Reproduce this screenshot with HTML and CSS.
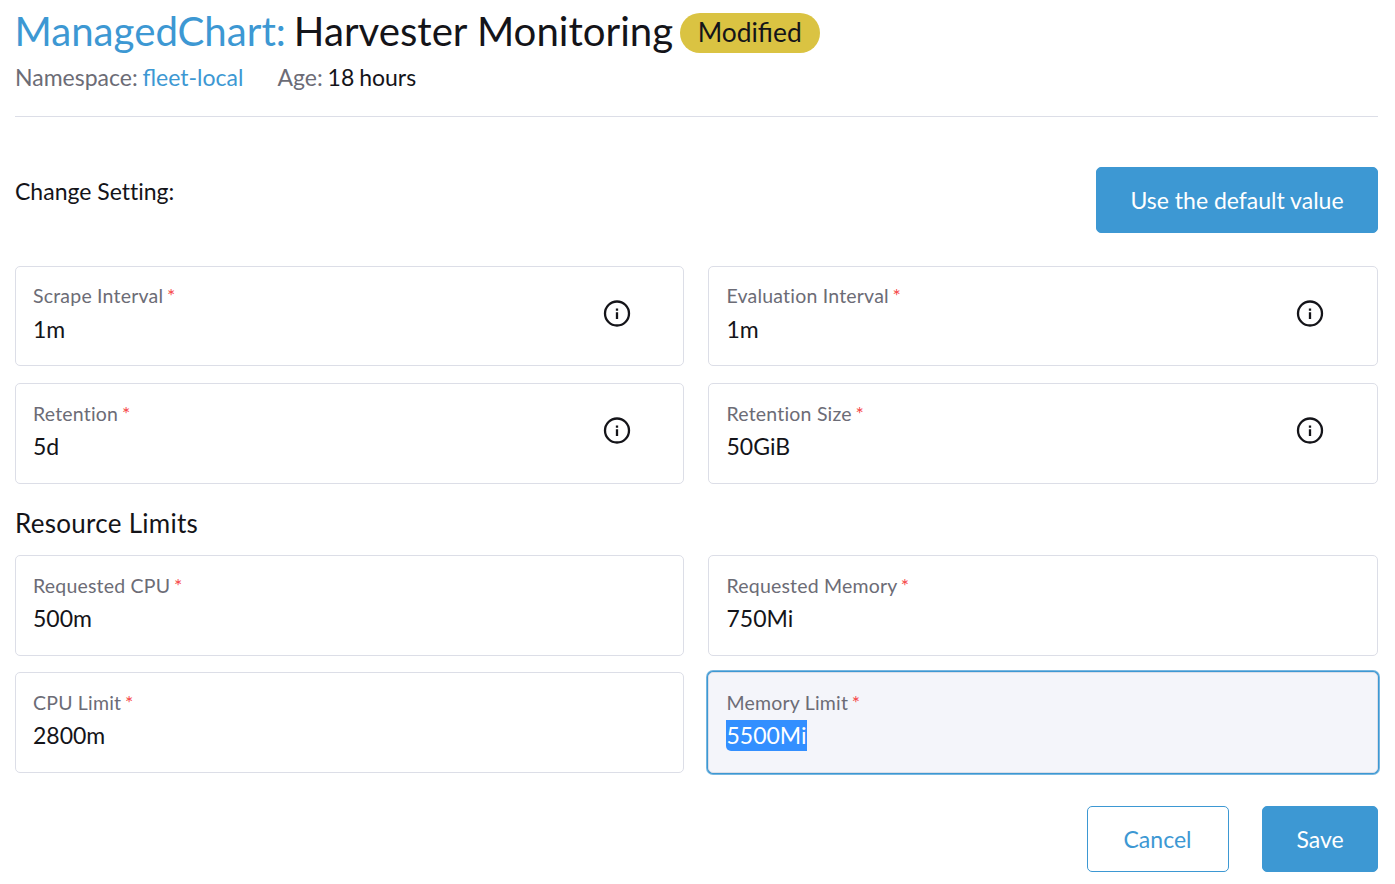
FILE: index.html
```html
<!DOCTYPE html>
<html lang="en">
<head>
<meta charset="utf-8">
<title>Harvester Monitoring</title>
<link rel="stylesheet" href="styles.css">
</head>
<body>
<main class="page">
  <header class="masthead">
    <h1 class="title"><span class="link kind">ManagedChart:</span> <span class="name">Harvester Monitoring</span><span class="badge">Modified</span></h1>
    <div class="meta"><span>Namespace: <a class="link">fleet-local</a></span><span>Age: <b class="value-text">18 hours</b></span></div>
  </header>
  <section class="setting-bar">
    <span class="setting-label">Change Setting:</span>
    <button class="btn primary default-btn">Use the default value</button>
  </section>
  <section class="fields general">
    <div class="field"><div class="label">Scrape Interval <i class="req">*</i></div><div class="input">1m</div><svg class="info" viewBox="0 0 28 28"><circle cx="14" cy="13.5" r="12"/><path d="M14 12.3v6.7M14 8.6v2.2"/></svg></div>
    <div class="field"><div class="label">Evaluation Interval <i class="req">*</i></div><div class="input">1m</div><svg class="info" viewBox="0 0 28 28"><circle cx="14" cy="13.5" r="12"/><path d="M14 12.3v6.7M14 8.6v2.2"/></svg></div>
    <div class="field"><div class="label">Retention <i class="req">*</i></div><div class="input">5d</div><svg class="info" viewBox="0 0 28 28"><circle cx="14" cy="13.5" r="12"/><path d="M14 12.3v6.7M14 8.6v2.2"/></svg></div>
    <div class="field"><div class="label">Retention Size <i class="req">*</i></div><div class="input">50GiB</div><svg class="info" viewBox="0 0 28 28"><circle cx="14" cy="13.5" r="12"/><path d="M14 12.3v6.7M14 8.6v2.2"/></svg></div>
  </section>
  <h2 class="subtitle">Resource Limits</h2>
  <section class="fields limits">
    <div class="field"><div class="label">Requested CPU <i class="req">*</i></div><div class="input">500m</div></div>
    <div class="field"><div class="label">Requested Memory <i class="req">*</i></div><div class="input">750Mi</div></div>
    <div class="field"><div class="label">CPU Limit <i class="req">*</i></div><div class="input">2800m</div></div>
    <div class="field focused"><div class="label">Memory Limit <i class="req">*</i></div><div class="input"><span class="selected">5500Mi</span></div></div>
  </section>
  <footer class="actions"><button class="btn secondary">Cancel</button><button class="btn primary save">Save</button></footer>
</main>
</body>
</html>
```
FILE: styles.css
```css
* { box-sizing: border-box; }
body { margin: 0; background: #fff; color: #141419; font-family: Lato, sans-serif; font-size: 23px; }
.page { height: 884px; padding: 0 17px 0 15px; overflow: hidden; }
.masthead { height: 117px; border-bottom: 1px solid #dcdee7; }
.title { display: flex; align-items: flex-start; height: 64px; margin: 0 0 0 -.5px; font-size: 40.2px; line-height: 62px; font-weight: 400; white-space: pre; }
.link { color: #3d98d3; }
.name { margin-left: 8px; }
.badge { height: 40px; margin: 13px 0 0 6.5px; padding: 0 18px; border-radius: 20px; background: #dac342; font-size: 26.4px; line-height: 39px; }
.meta { display: flex; gap: 34px; color: #6c6c76; line-height: 26px; word-spacing: -1px; }
.value-text { color: #141419; font-weight: 400; }
.setting-bar { display: flex; justify-content: space-between; height: 149px; padding-top: 50px; }
.setting-label { line-height: 48px; font-variant-ligatures: none; }
.btn { height: 66px; border: 1px solid #3d98d3; border-radius: 5px; font: 23px Lato, sans-serif; padding: 0; }
.primary { background: #3d98d3; color: #fff; }
.default-btn { width: 282px; }
.fields { display: grid; grid-template-columns: 669px 670px; column-gap: 24px; grid-template-rows: 100px 101px; row-gap: 17px; }
.field { position: relative; padding: 17px; border: 1px solid #dcdee7; border-radius: 5px; }
.field:nth-child(even) { padding-left: 17.5px; }
.label { color: #6c6c76; font-size: 19.5px; line-height: 26px; letter-spacing: .2px; }
.general .field:nth-child(-n+2) { padding-top: 16px; }
.general .field:nth-child(-n+2) .input { margin-top: 4px; }
.req { margin-left: -1.5px; color: #f64747; font-style: normal; }
.input { font-size: 23px; line-height: 32px; margin-top: 3px; }
.info { position: absolute; right: 52px; top: 33px; width: 28px; height: 28px; fill: none; stroke: #141419; stroke-width: 2.3; }
.field:nth-child(even) .info { right: 53px; }
.subtitle { height: 71px; margin: 0; padding-top: 23px; font-size: 26px; line-height: 32px; font-weight: 400; letter-spacing: .28px; }
.limits { grid-template-rows: 101px 101px; row-gap: 16px; }
.focused { background: #f4f5fa; box-shadow: 0 0 0 1px #3d98d3, 0 0 0 2px #3d98d3b3; }
.focused .input { margin-left: -.5px; }
.selected { display: inline-block; width: 81px; height: 31px; padding-left: .5px; border-bottom-left-radius: 5px; background: #338fff; color: #fff; line-height: 31px; }
.actions { display: flex; justify-content: flex-end; gap: 33px; padding-top: 33px; }
.secondary { width: 142px; padding-right: 1px; background: #fff; color: #3d98d3; }
.save { width: 116px; }
```
